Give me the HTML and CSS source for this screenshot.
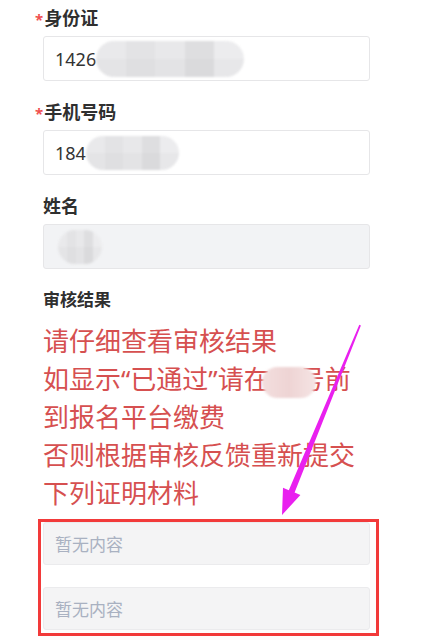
FILE: index.html
```html
<!DOCTYPE html>
<html lang="zh-CN">
<head>
  <meta charset="UTF-8" />
  <meta name="viewport" content="width=device-width, initial-scale=1.0" />
  <title>报名信息</title>
  <link rel="stylesheet" href="styles.css">
</head>
<body>
  <div class="page">
    <div class="field">
      <div class="label"><span class="req">*</span>身份证</div>
      <div class="input">1426<span class="mask mask-id"></span></div>
    </div>

    <div class="field">
      <div class="label"><span class="req">*</span>手机号码</div>
      <div class="input">184<span class="mask mask-phone"></span></div>
    </div>

    <div class="field">
      <div class="label">姓名</div>
      <div class="input disabled"><span class="mask mask-name"></span></div>
    </div>

    <div class="label small">审核结果</div>
    <div class="notice">
      <div>请仔细查看审核结果</div>
      <div>如显示“已通过”请在<span class="mask mask-date"></span>号前</div>
      <div>到报名平台缴费</div>
      <div>否则根据审核反馈重新提交</div>
      <div>下列证明材料</div>
    </div>

    <div class="highlight">
      <div class="input empty">暂无内容</div>
      <div class="input empty">暂无内容</div>
    </div>
  </div>

  <!-- annotation arrow -->
  <svg class="arrow" width="447" height="641" viewBox="0 0 447 641">
    <polygon points="359.3,324.7 360.9,325.4 294.6,492.6 300.4,495 282,515 283,487.8 288.8,490.2" fill="#e920ef" />
  </svg>
</body>
</html>
```

FILE: styles.css
```css
body {
  margin: 0;
  background: #fff;
  font-family: "Noto Sans", "Noto Sans CJK SC", sans-serif;
  color: #333;
}
.page {
  padding: 6px 0 0 43px;
  width: 327px;
}
.field {
  margin-bottom: 19px;
}
.label {
  height: 24px;
  font-size: 18px;
  font-weight: bold;
  line-height: 24px;
  margin-bottom: 6px;
  color: #2f2f2f;
}
.label.small {
  font-size: 17px;
  margin-bottom: 10px;
}
.req {
  color: #f05050;
  font-size: 15px;
  line-height: 1;
  margin-left: -8px;
  margin-right: 1px;
}
.input {
  height: 45px;
  box-sizing: border-box;
  border: 1px solid #e6e6e8;
  border-radius: 3px;
  padding-left: 11px;
  display: flex;
  align-items: center;
  font-size: 18px;
  color: #333;
}
.input.disabled {
  background: #f2f3f5;
}
.input.empty {
  height: 43px;
  background: #f4f4f5;
  color: #a9b1c1;
  font-size: 17px;
  border-color: #ebebed;
}
.input.empty + .input.empty {
  margin-top: 22px;
}
.mask {
  display: inline-block;
  border-radius: 18px;
  filter: blur(1px);
  background:
    linear-gradient(180deg, rgba(255,255,255,0) 50%, rgba(0,0,0,0.02) 50%),
    linear-gradient(90deg, #e9e9eb 0 20%, #e3e3e5 20% 40%, #e8e8ea 40% 60%, #dedee0 60% 80%, #ececee 80%);
}
.mask-id {
  width: 148px;
  height: 36px;
}
.mask-phone {
  width: 93px;
  height: 34px;
}
.mask-name {
  width: 44px;
  height: 34px;
  margin-left: 3px;
}
.notice {
  color: #d65050;
  font-size: 26px;
  line-height: 38px;
}
.mask-date {
  position: relative;
  z-index: 1;
  width: 54px;
  height: 31px;
  vertical-align: middle;
  margin: 0 -17px 0 -8px;
  background: linear-gradient(90deg, #f3dede, #eed4d4 50%, #f5e4e4);
}
.highlight {
  margin: 7px -9px 0 -5px;
  border: 3px solid #f23a3a;
  padding: 0 6px 3px 2px;
}
.arrow {
  position: absolute;
  top: 0;
  left: 0;
  pointer-events: none;
}
```
